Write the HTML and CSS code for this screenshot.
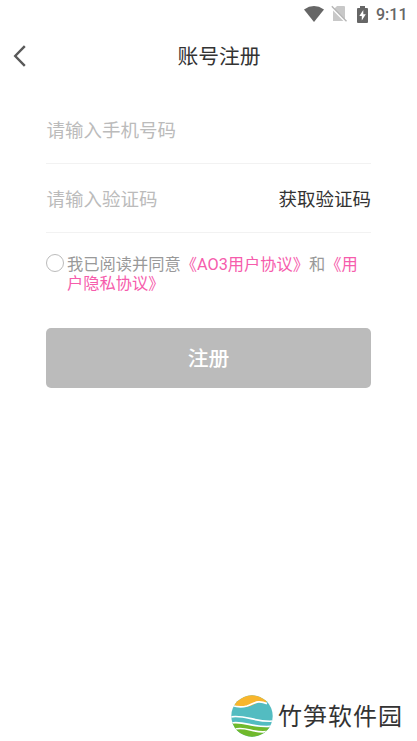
FILE: index.html
```html
<!DOCTYPE html>
<html lang="zh-CN">
<head>
<meta charset="utf-8">
<meta name="viewport" content="width=device-width, initial-scale=1">
<title>账号注册</title>
<link rel="stylesheet" href="styles.css">
</head>
<body>
<div class="screen">
  <div class="status">
    <svg class="wifi" width="20" height="16" viewBox="0 0 20 16"><path d="M0 3.4Q10-3.4 20 3.4L10 16Z" fill="#666"/></svg>
    <svg class="sim" width="16" height="18" viewBox="0 0 16 18"><path d="M6 1h7q1 0 1 1v14H2V5z" fill="#c8c8c8"/><path d="M.2 2.2 15.2 17.2" stroke="#fff" stroke-width="2.2"/><path d="M.8 1.2 15.5 16.3" stroke="#b5b5b5" stroke-width="1.4"/></svg>
    <svg class="battery" width="11" height="17" viewBox="0 0 11 17"><path d="M3 0h5v2h2q1 0 1 1v13q0 1-1 1H1q-1 0-1-1V3q0-1 1-1h2z" fill="#666"/><path d="M6.3 4 2.3 10h2.5v4.4L8.8 8.3H6.3z" fill="#fff"/></svg>
    <span class="time">9:11</span>
  </div>
  <header class="header">
    <svg class="back" width="14" height="24" viewBox="0 0 14 24"><path d="M11.8 2.2 2.2 12l9.6 9.8" fill="none" stroke="#595959" stroke-width="2.4"/></svg>
    <h1 class="title">账号注册</h1>
  </header>
  <main class="form">
    <div class="field phone"><span class="placeholder">请输入手机号码</span></div>
    <div class="field code"><span class="placeholder">请输入验证码</span><span class="get-code">获取验证码</span></div>
    <div class="agreement">
      <span class="radio"></span>
      <p class="terms">我已阅读并同意<span class="link">《AO3用户协议》</span>和<span class="link">《用<br>户隐私协议》</span></p>
    </div>
    <button class="submit">注册</button>
  </main>
  <footer class="brand">
    <svg width="42" height="42" viewBox="0 0 42 42">
      <defs><clipPath id="disc"><circle cx="21" cy="21" r="20.7"/></clipPath></defs>
      <g clip-path="url(#disc)">
        <path d="M0 0h42v42H0z" fill="#53bcc1"/>
        <path d="M0 0h38L35 8C26 4 23 12 14 12Q8 12 2 10z" fill="#f8b62d"/>
        <path d="M0 28Q9 27 18 30T42 32V42H0z" fill="#70b92c"/>
        <g fill="none" stroke="#fff" stroke-width="1.7">
          <path d="M1 10.5Q9 13 16 11C23 8.8 26 4.4 36 8.6"/>
          <path d="M-1 22C14 19 25 28 43 26"/>
          <path d="M-1 28.2C13 25 23 34 43 31"/>
          <path d="M3 34.5C15 30 23 40 39 36"/>
        </g>
      </g>
    </svg>
    <span class="brand-name">竹笋软件园</span>
  </footer>
</div>
</body>
</html>
```
FILE: styles.css
```css
* { box-sizing: border-box; }
body { margin: 0; background: #fff; font-family: Roboto, "Noto Sans CJK SC", sans-serif; }
.screen { width: 417px; height: 741px; display: flex; flex-direction: column; overflow: hidden; background: #fff; }
.status { height: 28px; display: flex; justify-content: flex-end; align-items: center; padding-right: 10px; color: #666; }
.sim { margin-left: 7px; }
.battery { margin-left: 10px; }
.time { width: 31px; margin-left: 8px; padding-top: 2px; font-size: 16px; line-height: 20px; font-weight: 500; white-space: nowrap; }
.header { height: 56px; display: grid; grid-template-columns: 40px 1fr 40px; align-items: center; }
.back { margin-left: 13px; }
.title { margin: 0; padding: 2px 0 0 21px; text-align: center; font-size: 20.8px; line-height: 30px; font-weight: 400; color: #333; }
.form { padding: 0 46px; }
.field { display: flex; justify-content: space-between; align-items: center; border-bottom: 1px solid #f2f2f2; font-size: 18.5px; line-height: 28px; width: 325px; }
.phone { height: 80px; padding-top: 14px; }
.placeholder { padding-left: .5px; color: #bbb; }
.code { height: 69px; padding-top: 4px; }
.get-code { color: #333; }
.agreement { display: flex; padding-top: 21px; }
.radio { flex: none; width: 18px; height: 18px; margin-right: 3px; border: 1.5px solid #bbb; border-radius: 50%; }
.terms { margin: 0; padding-top: 1px; font-size: 16.25px; line-height: 19px; color: #999; white-space: nowrap; }
.link { color: #f65cac; }
.submit { display: block; width: 325px; height: 60px; margin: 35px 0 0; padding: 2px 0 0; border: 0; border-radius: 5px; background: #bbb; color: #fff; font: 500 20.8px/58px Roboto, "Noto Sans CJK SC", sans-serif; }
.brand { display: flex; align-items: center; margin: auto 0 4px 231px; }
.brand-name { margin-left: 5px; padding-top: 2px; font-size: 24px; line-height: 36px; letter-spacing: 1px; color: #333; white-space: nowrap; }
```
